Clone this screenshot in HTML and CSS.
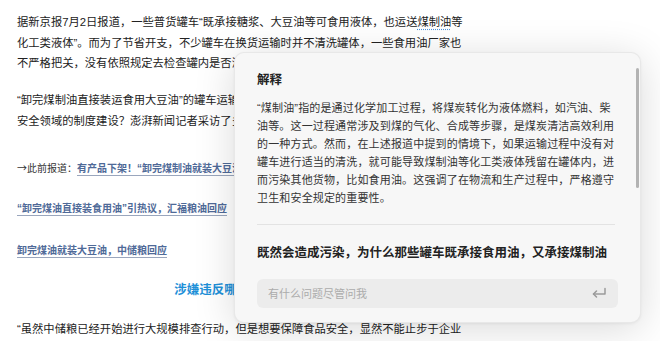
FILE: index.html
```html
<!DOCTYPE html>
<html lang="zh-CN">
<head>
<meta charset="utf-8">
<link rel="stylesheet" href="styles.css">
</head>
<body>
<main class="article">
  <p class="para p1">据新京报7月2日报道，一些普货罐车“既承接糖浆、大豆油等可食用液体，也运送<span class="term">煤制油</span>等化工类液体”。而为了节省开支，不少罐车在换货运输时并不清洗罐体，一些食用油厂家也不严格把关，没有依照规定去检查罐内是否清洗干净。</p>
  <p class="para p2">“卸完煤制油直接装运食用大豆油”的罐车运输乱象，暴露出了哪些问题？应该如何加强食品安全领域的制度建设？澎湃新闻记者采访了多位专家。</p>
  <p class="rel r1"><span class="arrow">→</span>此前报道：<a class="link" href="#">有产品下架！“卸完煤制油就装大豆油”追踪</a></p>
  <p class="rel r2"><a class="link" href="#">“卸完煤油直接装食用油”引热议，汇福粮油回应</a></p>
  <p class="rel r3"><a class="link" href="#">卸完煤油就装大豆油，中储粮回应</a></p>
  <h2 class="heading">涉嫌违反哪些法律法规？</h2>
  <p class="para p3">“虽然中储粮已经开始进行大规模排查行动，但是想要保障食品安全，显然不能止步于企业自查。”</p>
</main>

<section class="panel">
  <h3 class="panel-title">解释</h3>
  <p class="explain">“煤制油”指的是通过化学加工过程，将煤炭转化为液体燃料，如汽油、柴油等。这一过程通常涉及到煤的气化、合成等步骤，是煤炭清洁高效利用的一种方式。然而，在上述报道中提到的情境下，如果运输过程中没有对罐车进行适当的清洗，就可能导致煤制油等化工类液体残留在罐体内，进而污染其他货物，比如食用油。这强调了在物流和生产过程中，严格遵守卫生和安全规定的重要性。</p>
  <div class="divider"></div>
  <p class="question">既然会造成污染，为什么那些罐车既承接食用油，又承接煤制油</p>
  <div class="ask">
    <span class="placeholder">有什么问题尽管问我</span>
    <svg class="enter" width="16" height="12" viewBox="0 0 16 12" fill="none" stroke="#9a9a9a" stroke-width="1.5" stroke-linecap="round" stroke-linejoin="round">
      <path d="M14 1.5V7H2.5"/>
      <path d="M5.5 4L2.5 7L5.5 10"/>
    </svg>
  </div>
  <div class="thumb"></div>
</section>
</body>
</html>
```

FILE: styles.css
```css
html, body {
  margin: 0;
  padding: 0;
  background: #ffffff;
}

body {
  width: 660px;
  height: 341px;
  overflow: hidden;
  position: relative;
  font-family: "Liberation Sans", "Noto Sans CJK SC", sans-serif;
  color: #222222;
}

.article {
  width: 452px;
  padding: 12px 0 0 17px;
}

.para {
  margin: 0;
  font-size: 11.3px;
  line-height: 20.5px;
  letter-spacing: 0;
}

.p1 { margin-bottom: 16.5px; }
.p2 { margin-bottom: 27px; }

.term {
  text-decoration: underline dotted #4a90d9;
  text-underline-offset: 3px;
}

.rel {
  margin: 0;
  font-size: 10px;
  line-height: 20px;
  color: #333333;
}

.arrow {
  font-family: "Noto Sans CJK SC", sans-serif;
}

.r1 { margin-bottom: 20px; }
.r2 { margin-bottom: 22px; }
.r3 { margin-bottom: 19px; }

.link {
  color: #4f6a98;
  font-weight: 600;
  text-decoration: underline;
  text-decoration-color: #9aa6bd;
  text-underline-offset: 3px;
}

.heading {
  margin: 0 0 19px 0;
  font-size: 12.5px;
  line-height: 20px;
  font-weight: 700;
  color: #1e90d8;
  text-align: center;
}

.panel {
  position: absolute;
  left: 234px;
  top: 52px;
  width: 407px;
  height: 271px;
  box-sizing: border-box;
  padding: 18px 22px 14px 22px;
  background: #f7f7f7;
  border: 1px solid rgba(0, 0, 0, 0.06);
  border-radius: 10px;
  box-shadow: 0 6px 40px rgba(0, 0, 0, 0.15), 0 1px 3px rgba(0, 0, 0, 0.05);
  display: flex;
  flex-direction: column;
}

.panel-title {
  margin: 0 0 10px 0;
  font-size: 12.5px;
  line-height: 18px;
  font-weight: 700;
  color: #222222;
}

.explain {
  margin: 0;
  font-size: 11px;
  line-height: 18px;
  letter-spacing: 0.16px;
  color: #333333;
}

.divider {
  height: 1px;
  background: #e3e3e3;
  margin: 17px 3px 19px 0;
}

.question {
  margin: 0 0 17px 0;
  font-size: 12.5px;
  line-height: 18px;
  font-weight: 700;
  color: #222222;
}

.ask {
  height: 31px;
  border-radius: 6px;
  background: #ececec;
  display: flex;
  align-items: center;
  justify-content: space-between;
  padding: 0 11px 0 11px;
}

.placeholder {
  font-size: 11px;
  color: #ababab;
}

.enter {
  display: block;
}

.thumb {
  position: absolute;
  left: 401px;
  top: 15px;
  width: 3px;
  height: 120px;
  border-radius: 2px;
  background: #b3b3b3;
}
```
